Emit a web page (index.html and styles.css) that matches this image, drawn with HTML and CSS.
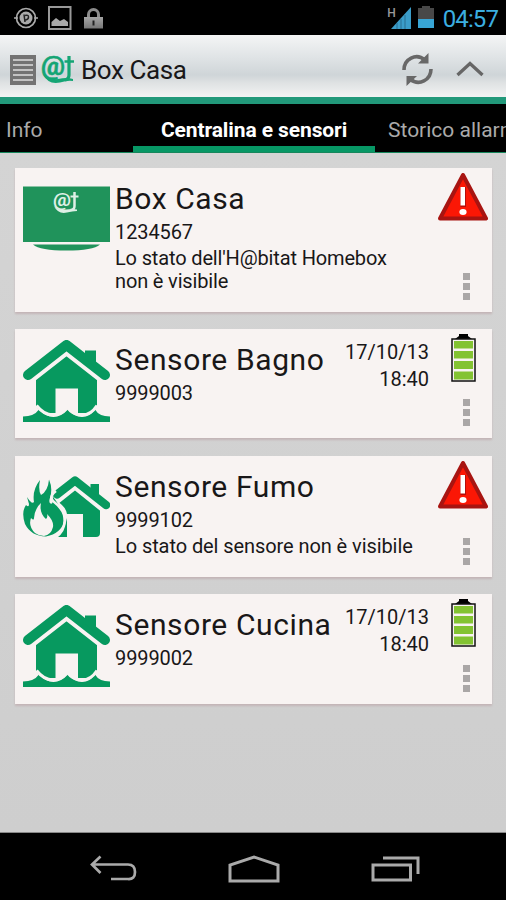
FILE: index.html
```html
<!DOCTYPE html>
<html lang="it">
<head>
<meta charset="utf-8">
<title>Box Casa</title>
<link rel="stylesheet" href="styles.css">
</head>
<body>
<svg class="defs" width="0" height="0">
  <defs>
    <linearGradient id="lockfill" x1="0" y1="0" x2="0" y2="1"><stop offset="0" stop-color="#a5a5a5"/><stop offset="1" stop-color="#777"/></linearGradient>
    <symbol id="warning" viewBox="0 0 50 48">
      <path d="M25 2 48 45.500H2Z" fill="#fb1705" stroke="#a81411" stroke-width="4" stroke-linejoin="round"/>
      <path d="M22.500 14h5.500v20h-5.500z" fill="#b40e0b"/>
      <path d="M22.500 14h4.500v18.500h-4.500z" fill="#fff"/>
      <ellipse cx="25" cy="39" rx="3.600" ry="3" fill="#fff"/>
    </symbol>
    <symbol id="battery" viewBox="0 0 25 48">
      <path d="M8 0h9v2l4 3H4l4-3z" fill="#000"/>
      <rect x="1" y="5" width="23" height="42" fill="#f8f3f2" stroke="#111" stroke-width="1.500"/>
      <path d="M3 7h19v7.500H3zM3 17h19v7.500H3zM3 27h19v8H3zM3 37.500h19v8H3z" fill="#83c332"/>
    </symbol>
    <symbol id="flood" viewBox="0 0 87 83">
      <path d="M43.500 14 74 38v27.500q-1.500 5-8 7.500H55V48.500H32.500V73H21q-6-3-8-7.500V38z" fill="#07995f"/>
      <path d="M7 42 43.500 13.500 80 42" fill="none" stroke="#f8f3f2" stroke-width="4.500"/>
      <path d="M5 35 43.500 5 82 35" fill="none" stroke="#07995f" stroke-width="10" stroke-linecap="round" stroke-linejoin="round"/>
      <path d="M62 10.500h11V28L62 19z" fill="#07995f"/>
      <path d="M0 82V76.500q11 0 16-7 7 7.500 14.500 7.500T45 69.500q6 7.500 14 7.500T72 69.500q4 7 15 7V82z" fill="#07995f"/>
      <path d="M13.500 65.500Q21 75 30 75T44 67Q50 75 59 75T74 65.500" fill="none" stroke="#f8f3f2" stroke-width="3"/>
    </symbol>
  </defs>
</svg>
<div class="screen">
  <header class="status">
    <div class="status-left">
      <svg width="24" height="24" viewBox="0 0 24 24"><g fill="none" stroke="#aaa" stroke-width="1.700"><circle cx="12" cy="12" r="9.500"/><path d="M0 12h4M20 12h4"/></g><path d="M12 5.500a6.500 6.500 0 1 0 6.500 6.500A6.500 6.500 0 0 0 12 5.500z" fill="#aaa"/><path d="M10 8.500l1 7.500M11 9.500q3.500-1 3.500 1.500t-3 3" fill="none" stroke="#222" stroke-width="1.500"/></svg>
      <svg width="24" height="24" viewBox="0 0 24 24"><rect x="1" y="1" width="21.500" height="22" fill="none" stroke="#999" stroke-width="2"/><path d="M3.500 20v-4l4.500-4 4 3 4-2 4 3v4z" fill="#aaa"/></svg>
      <svg width="19" height="24" viewBox="0 0 19 24"><path d="M4.500 11V7.500a5 5 0 0 1 10 0V11" fill="none" stroke="#8c8c8c" stroke-width="3"/><path d="M0 10h19v11.500H0z" fill="url(#lockfill)"/><path d="M8.500 13.500h2v5h-2z" fill="#222"/></svg>
    </div>
    <div class="status-right">
      <span class="net">H</span>
      <svg class="signal" width="20" height="22" viewBox="0 0 20 22"><path d="M20 0v22H0z" fill="#3b9dc9"/><path d="M6 16v6M10 12v10M14 8v14" stroke="#286f91" stroke-width="1"/></svg>
      <svg class="phone-battery" width="16" height="23" viewBox="0 0 16 23"><path d="M4 0h8v2h4v11H0V2h4z" fill="#484848"/><path d="M0 13h16v9H0z" fill="#38a5d5"/></svg>
      <span class="clock">04:57</span>
    </div>
  </header>
  <div class="bar">
    <svg class="menu" width="26" height="30" viewBox="0 0 26 30"><path d="M0 0h26v30H0z" fill="#737373"/><path d="M3 5h20M3 10h20M3 15h20M3 20h20M3 25h20" stroke="#dedede" stroke-width="1.400"/></svg>
    <svg class="brand" width="34" height="30" viewBox="0 0 34 30"><text x="0" y="20" class="logo-at" textLength="24" lengthAdjust="spacingAndGlyphs">@</text><path d="M28 1v19q0 4-4 5" fill="none" stroke="#14a574" stroke-width="3.200"/><path d="M23.500 6.500h9.500" stroke="#14a574" stroke-width="2.500"/><path d="M2 19q6 7 15 5 9-2 15 0v2q-5-1-13 1.500Q7 30 2 19z" fill="#14a574"/></svg>
    <h1>Box Casa</h1>
    <svg class="refresh" width="31" height="33" viewBox="0 0 31 33"><g fill="none" stroke="#686868" stroke-width="3.600"><path d="M2 17C2 6 14-.500 23 7"/><path d="M29 16c0 11-12 17.500-21 10"/></g><path d="M26.500 0v10.500H16zM4.500 33V23H15z" fill="#686868"/></svg>
    <svg class="up" width="28" height="16" viewBox="0 0 28 16"><path d="M1.500 14 14 2.500 26.500 14" fill="none" stroke="#666" stroke-width="3.300"/></svg>
  </div>
  <nav class="tabs">
    <span class="tab info">Info</span>
    <span class="tab active">Centralina e sensori</span>
    <span class="tab history">Storico allarmi</span>
  </nav>
  <main>
    <article class="card box">
      <svg class="icon" width="87" height="83" viewBox="0 0 87 83"><path d="M0 8.500h87V64H0z" fill="#20935b"/><path d="M10 66.500h67q-7 6-33.500 6T10 66.500z" fill="#20935b"/><text x="30" y="28" class="box-at" textLength="18" lengthAdjust="spacingAndGlyphs">@</text><path d="M51.500 14v14q0 4-4 4" fill="none" stroke="#def0e6" stroke-width="2.500"/><path d="M47.500 18.500h8" stroke="#def0e6" stroke-width="2"/><path d="M31 28q5 5 12 3.500 6-1 11 0v1.500q-5 0-10 1.500-9 2-13-6.500z" fill="#def0e6"/></svg>
      <div class="copy"><h2>Box Casa</h2><div class="serial">1234567</div><p>Lo stato dell'H@bitat Homebox<br>non è visibile</p></div>
      <div class="state"><svg width="50" height="48"><use href="#warning"/></svg><span class="more"><i></i><i></i><i></i></span></div>
    </article>
    <article class="card bath">
      <svg class="icon" width="87" height="83"><use href="#flood"/></svg>
      <div class="copy"><h2>Sensore Bagno</h2><div class="serial">9999003</div></div>
      <time>17/10/13<br>18:40</time>
      <div class="state"><svg width="25" height="48"><use href="#battery"/></svg><span class="more"><i></i><i></i><i></i></span></div>
    </article>
    <article class="card smoke">
      <svg class="icon" width="87" height="83" viewBox="0 0 87 83">
        <path d="M52 22 77 41v26q0 4-4 4H60V48H44q-1-7-10-13zM44 52V71H33q9-6 11-19z" fill="#07995f"/>
        <path d="M30 39.500 52 22 80 44.500" fill="none" stroke="#f8f3f2" stroke-width="4"/>
        <path d="M34 28.500 52 14.500 83 39" fill="none" stroke="#07995f" stroke-width="8.500" stroke-linecap="round" stroke-linejoin="round"/>
        <path d="M67.500 18H76v14l-8.500-7z" fill="#07995f"/>
        <path d="M4 31q5 8 7 5Q9 24 17 14q-2 10 1 15Q25 25 26 13.500q4 9 1 18-2 7 2 6 2-3 0-8 8 10 8 14 5 3 4 12-3 12-18 15Q8 70 2 58-2 46 3 39q3 3 3-1Z" fill="#07995f"/>
        <path d="M12 67Q5 60 8 52q3 3 3 0 1-10 7-15-2 10 5 16 2-2 1-5 7 7 6 13-2 8-9 9-5 0-9-3z" fill="#f8f3f2"/>
        <path d="M33 25q-7 5-3 10 9 7 11 14 3 15-9 23" fill="none" stroke="#f8f3f2" stroke-width="2.500"/>
      </svg>
      <div class="copy"><h2>Sensore Fumo</h2><div class="serial">9999102</div><p>Lo stato del sensore non è visibile</p></div>
      <div class="state"><svg width="50" height="48"><use href="#warning"/></svg><span class="more"><i></i><i></i><i></i></span></div>
    </article>
    <article class="card kitchen">
      <svg class="icon" width="87" height="83"><use href="#flood"/></svg>
      <div class="copy"><h2>Sensore Cucina</h2><div class="serial">9999002</div></div>
      <time>17/10/13<br>18:40</time>
      <div class="state"><svg width="25" height="48"><use href="#battery"/></svg><span class="more"><i></i><i></i><i></i></span></div>
    </article>
  </main>
  <footer>
    <svg width="47" height="27" viewBox="0 0 47 27"><path d="M10.500 1.500 2 9.500l8.500 8.500M2 9.500h36q7 0 7 7.500t-7 7H21" fill="none" stroke="#aaa" stroke-width="2.700"/></svg>
    <svg width="52" height="28" viewBox="0 0 52 28"><path d="M2 26V10L26 2l24 8v16z" fill="none" stroke="#aaa" stroke-width="3"/></svg>
    <svg width="50" height="26" viewBox="0 0 50 26"><path d="M2 9h37.500v15H2zM12 2h35v16" fill="none" stroke="#aaa" stroke-width="3"/></svg>
  </footer>
</div>
</body>
</html>
```
FILE: styles.css
```css
* { box-sizing: border-box; }
body { margin: 0; font-family: Roboto, "Liberation Sans", sans-serif; color: #191718; }
h1, h2, p { margin: 0; font-weight: 400; }
svg { display: block; flex: none; }
.defs { position: absolute; }
.screen { width: 506px; height: 900px; overflow: hidden; display: flex; flex-direction: column; background: #d0d0d0; }

.status { height: 35px; background: #000; display: flex; justify-content: space-between; padding: 6px 8px 0 14px; flex: none; }
.status-left { display: flex; gap: 10px; }
.status-left svg:last-child { margin-left: 2px; margin-top: 1px; }
.status-right { display: flex; }
.net { font-size: 12px; line-height: 14px; font-weight: 500; color: #999; }
.signal { margin: 1px 7px 0 -5px; }
.phone-battery { margin-right: 9px; }
.clock { font-size: 24px; line-height: 26px; letter-spacing: -0.9px; color: #3bafe0; }

.bar { height: 69px; flex: none; display: flex; align-items: flex-start; padding: 20px 22px 0 10px; background: linear-gradient(#f4f5f5 0, #e0e4e6 22px, #cfd5d8 40px, #dfe2e3 48px, #f1f2f2 61px); border-bottom: 7px solid #22997a; }
.menu { margin-right: 5px; }
.brand { overflow: visible; }
.logo-at { font-family: Roboto, sans-serif; font-weight: 700; font-size: 25px; fill: #14a574; stroke: #14a574; stroke-width: 0.5px; }
h1 { font-size: 26px; line-height: 31px; margin: 0 auto 0 6px; white-space: nowrap; letter-spacing: -0.4px; }
.refresh { margin: -2px 23px 0 0; }
.up { margin-top: 6px; }

.tabs { height: 49px; flex: none; display: flex; background: #000; color: #aaa; border-bottom: 1px solid #16875c; font-size: 21px; line-height: 52px; white-space: nowrap; overflow: hidden; }
.info { width: 133px; padding-left: 6px; flex: none; }
.active { width: 242px; flex: none; text-align: center; color: #fff; font-weight: 700; border-bottom: 6px solid #079765; letter-spacing: -0.1px; }
.history { padding-left: 13px; }

main { flex: 1; padding: 14.5px 14px 0 14.500px; background: linear-gradient(#d4d4d4, #cecece); border-bottom: 1px solid #888; }
.card { display: flex; background: #f8f3f2; padding-left: 8.500px; box-shadow: 0 2px 2px #c4b5b7; }
.box { height: 144.500px; margin-bottom: 17px; }
.bath { height: 109px; margin-bottom: 17.500px; }
.smoke { height: 121.500px; margin-bottom: 17px; }
.kitchen { height: 110px; }
.icon { margin: 10.500px 5px 0 0; }
.box-at { font-family: Roboto, sans-serif; font-weight: 700; font-size: 19px; fill: #def0e6; }
.copy { flex: 1; min-width: 0; padding-top: 13px; white-space: nowrap; }
h2 { font-size: 30px; line-height: 36px; letter-spacing: 0.6px; }
.serial { font-size: 20px; line-height: 30px; letter-spacing: -0.1px; }
.copy p { font-size: 20px; line-height: 23px; letter-spacing: -0.08px; }
.box p { letter-spacing: -0.15px; }
time { font-size: 20px; line-height: 27px; padding-top: 10px; text-align: right; }
.state { width: 63px; flex: none; display: flex; flex-direction: column; justify-content: space-between; align-items: center; padding: 5px 4px 12px 9px; }
.more { display: flex; flex-direction: column; gap: 3px; margin-left: 7px; }
.more i { width: 7px; height: 7px; background: #aaa6a6; }

footer { height: 67px; flex: none; background: #000; display: flex; justify-content: space-between; align-items: center; padding: 4px 85px 0 90px; }
```
